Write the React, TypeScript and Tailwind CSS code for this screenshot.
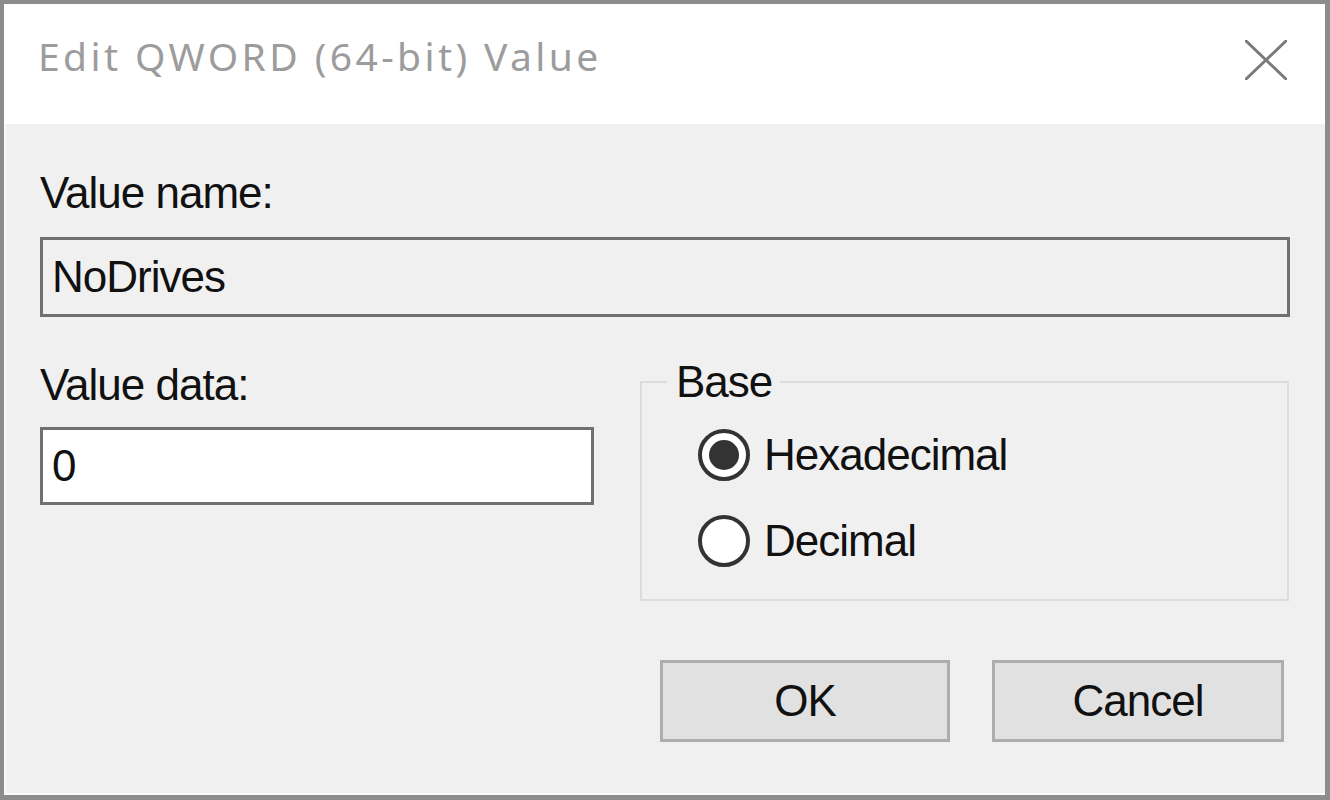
import React from "react";

const body = { fontFamily: '"Liberation Sans", Arial, sans-serif' };

function Radio({ checked, label }: { checked?: boolean; label: string }) {
  return (
    <div className="flex items-center h-[52px]">
      <div className="w-[52px] h-[52px] rounded-full border-[4px] border-[#333333] bg-white flex items-center justify-center shrink-0">
        {checked && <div className="w-[30px] h-[30px] rounded-full bg-[#333333]" />}
      </div>
      <span className="ml-[14px] text-[44px] leading-[44px] tracking-[-1px] text-[#111111]">{label}</span>
    </div>
  );
}

export default function App() {
  return (
    <div
      className="w-[1330px] h-[800px] flex flex-col border-t-4 border-l-4 border-r-[5px] border-b-[5px] border-[#8c8c8c] bg-[#f0f0f0] overflow-hidden"
      style={body}
    >
      <div className="h-[120px] bg-white flex items-start justify-between shrink-0">
        <div
          className="pl-[34px] pt-[32px] text-[39px] leading-[39px] tracking-[3.4px] text-[#9c9c9c]"
          style={{ fontFamily: '"Noto Sans", "Open Sans", sans-serif' }}
        >
          Edit QWORD (64-bit) Value
        </div>
        <div className="pt-[36px] pr-[38px]">
          <svg width="42" height="40" viewBox="0 0 42 40">
            <path d="M1 1 L41 39 M41 1 L1 39" stroke="#7a7a7a" strokeWidth="3" strokeLinecap="round" />
          </svg>
        </div>
      </div>

      <div className="flex-1 flex flex-col pl-[36px] pr-[35px] shadow-[inset_2px_-2px_0_#fafafa]">
        <div className="mt-[47px] text-[44px] leading-[44px] tracking-[-1px] text-[#111111]">Value name:</div>
        <div className="mt-[22px] h-[80px] border-[3px] border-[#707070] bg-[#f0f0f0] flex items-center pl-[9px]">
          <span className="text-[44px] leading-[44px] tracking-[-1px] text-[#111111]">NoDrives</span>
        </div>

        <div className="mt-[43px] flex items-start gap-[46px]">
          <div className="w-[554px] pt-[3px] flex flex-col">
            <div className="text-[44px] leading-[44px] tracking-[-1px] text-[#111111]">Value data:</div>
            <div className="mt-[20px] h-[78px] border-[3px] border-[#707070] bg-white flex items-center pl-[9px]">
              <span className="text-[44px] leading-[44px] tracking-[-1px] text-[#111111]">0</span>
            </div>
          </div>
          <fieldset className="w-[649px] border-2 border-[#dcdcdc] p-0">
            <legend className="ml-[25px] pl-[9px] pr-[8px] text-[44px] leading-[44px] tracking-[-1px] text-[#111111]">
              Base
            </legend>
            <div className="pl-[56px] pt-[25px] pb-[32px] flex flex-col gap-[34px]">
              <Radio checked label="Hexadecimal" />
              <Radio label="Decimal" />
            </div>
          </fieldset>
        </div>

        <div className="mt-[59px] flex justify-end gap-[42px] pr-[6px]">
          <div className="w-[290px] h-[82px] border-[3px] border-[#adadad] bg-[#e1e1e1] flex items-center justify-center">
            <span className="text-[44px] leading-[44px] tracking-[-1px] text-[#111111]">OK</span>
          </div>
          <div className="w-[292px] h-[82px] border-[3px] border-[#adadad] bg-[#e1e1e1] flex items-center justify-center">
            <span className="text-[44px] leading-[44px] tracking-[-1px] text-[#111111]">Cancel</span>
          </div>
        </div>
      </div>
    </div>
  );
}
